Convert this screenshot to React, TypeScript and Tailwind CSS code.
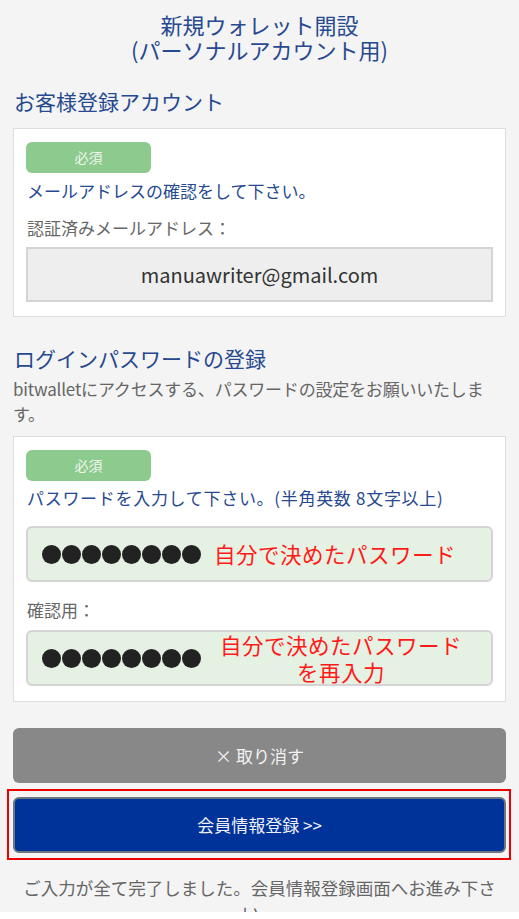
import React from "react";

const font = { fontFamily: '"Noto Sans CJK JP", "Noto Sans", sans-serif' };

function Badge() {
  return (
    <div className="flex h-[31px] w-[125px] items-center justify-center rounded-[6px] bg-[#8dca8d] text-[14px] text-[#eef6ee]">
      必須
    </div>
  );
}

function Dots() {
  return (
    <div className="flex gap-[1px]">
      {Array.from({ length: 8 }).map((_, i) => (
        <span key={i} className="block h-[19px] w-[19px] rounded-full bg-[#222222]" />
      ))}
    </div>
  );
}

export default function App() {
  return (
    <div className="min-h-[919px] bg-white" style={font}>
      <div className="h-[912px] overflow-hidden bg-[#f4f4f4] px-[13px] pt-[12px]">
        <h1 className="text-center text-[22px] leading-[25px] text-[#27498f]">
          新規ウォレット開設
          <br />
          (パーソナルアカウント用)
        </h1>

        <h2 className="mt-[25px] pl-[1px] text-[21px] leading-[28px] text-[#27498f]">
          お客様登録アカウント
        </h2>

        <section className="mt-[13px] border border-[#dddddd] bg-white px-[12px] pb-[14px] pt-[13px]">
          <Badge />
          <p className="mt-[6px] pl-[1px] text-[17px] leading-[24px] text-[#27498f]">
            メールアドレスの確認をして下さい。
          </p>
          <p className="mt-[13px] pl-[1px] text-[17px] leading-[24px] text-[#666666]">
            認証済みメールアドレス：
          </p>
          <div className="mt-[7px] flex h-[55px] items-center justify-center border-2 border-[#d4d4d4] bg-[#eeeeee] text-[20px] text-[#333333]">
            manuawriter@gmail.com
          </div>
        </section>

        <h2 className="mt-[27px] pl-[1px] text-[21px] leading-[28px] text-[#27498f]">
          ログインパスワードの登録
        </h2>
        <p className="mt-[4px] text-[17px] leading-[25px] tracking-[-0.2px] text-[#666666]">
          bitwalletにアクセスする、パスワードの設定をお願いいたします。
        </p>

        <section className="mt-[10px] border border-[#dddddd] bg-white px-[12px] pb-[15px] pt-[13px]">
          <Badge />
          <p className="mt-[5px] pl-[1px] text-[17px] leading-[24px] tracking-[0.7px] text-[#27498f]">
            パスワードを入力して下さい。(半角英数 8文字以上)
          </p>
          <div className="mt-[16px] flex h-[56px] items-center gap-[13px] rounded-[6px] border-2 border-[#d4d4d4] bg-[#e5f1e2] pl-[14px]">
            <Dots />
            <span className="text-[21.5px] leading-[26px] tracking-[0.5px] text-[#ff1a1a]">
              自分で決めたパスワード
            </span>
          </div>
          <p className="mt-[16px] pl-[1px] text-[17px] leading-[24px] text-[#666666]">確認用：</p>
          <div className="mt-[8px] flex h-[56px] items-center rounded-[6px] border-2 border-[#d4d4d4] bg-[#e5f1e2] pl-[14px]">
            <Dots />
            <span className="ml-[19px] text-center text-[21.5px] leading-[27px] tracking-[0.5px] text-[#ff1a1a]">
              自分で決めたパスワード
              <br />
              を再入力
            </span>
          </div>
        </section>

        <button className="mt-[26px] flex h-[55px] w-full items-center justify-center rounded-[6px] bg-[#888888] text-[17px] text-[#f2f2f2]">
          × 取り消す
        </button>

        <div className="relative mt-[14px]">
          <button className="flex h-[56px] w-full items-center justify-center rounded-[6px] border-2 border-[#6e7480] bg-[#00339a] text-[17px] text-[#eef0f6]">
            会員情報登録 &gt;&gt;
          </button>
          <div className="pointer-events-none absolute bottom-[-7px] left-[-6px] right-[-5px] top-[-8px] border-2 border-[#ee0000]" />
        </div>

        <p className="mt-[22px] px-[8px] text-center text-[17.5px] leading-[25px] text-[#666666]">
          ご入力が全て完了しました。会員情報登録画面へお進み下さい。
        </p>
      </div>
    </div>
  );
}
